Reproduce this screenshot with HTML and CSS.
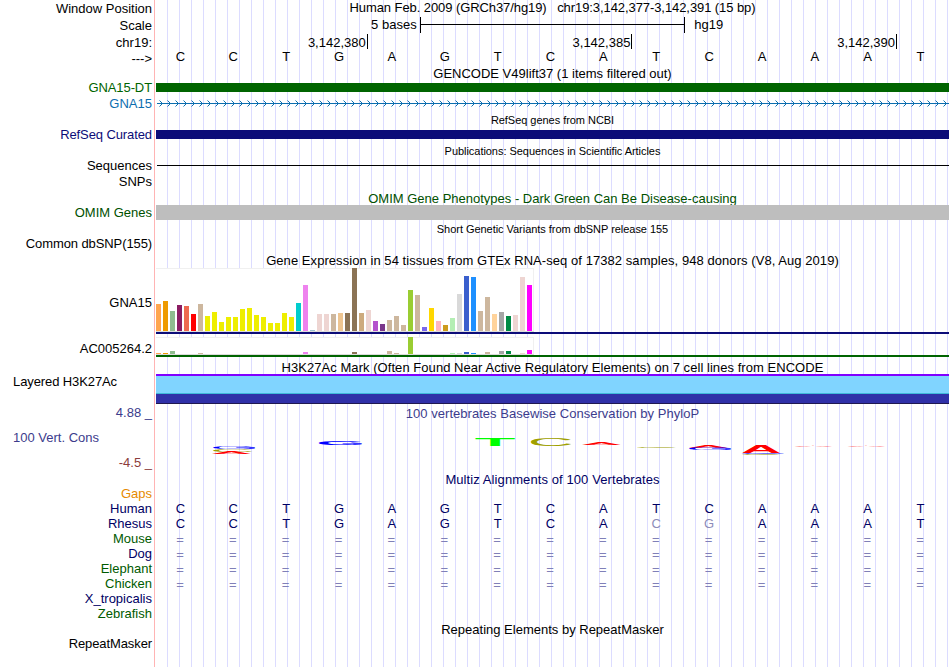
FILE: index.html
```
<!DOCTYPE html>
<html lang="en">
<head>
  <meta charset="UTF-8">
  <meta name="viewport" content="width=device-width, initial-scale=1.0">
  <title>Human chr19:3,142,377-3,142,391 - Genome Browser</title>
  <link rel="stylesheet" href="styles.css">
</head>
<body>
  <main class="browser">
    <!-- ruler -->
    <div class="row ruler-row">
      <div class="label">Window Position</div>
      <div class="track position">Human Feb. 2009 (GRCh37/hg19)&nbsp;&nbsp; chr19:3,142,377-3,142,391 (15 bp)</div>
    </div>
    <div class="row ruler-row">
      <div class="label">Scale</div>
      <div class="track scale">
        <span class="scale-size">5 bases</span>
        <span class="scale-bar"></span>
        <span class="scale-db">hg19</span>
      </div>
    </div>
    <div class="row ruler-row">
      <div class="label">chr19:</div>
      <div class="track ticks">
        <span>3,142,380</span>
        <span>3,142,385</span>
        <span>3,142,390</span>
      </div>
    </div>
    <div class="row base-row">
      <div class="label">---&gt;</div>
      <div class="track bases" data-seq="CCTGAGTCATCAAAT"></div>
    </div>

    <!-- genes -->
    <div class="row title-row gencode-title">
      <div class="label"></div>
      <div class="track">GENCODE V49lift37 (1 items filtered out)</div>
    </div>
    <div class="row">
      <div class="label green tight">GNA15-DT</div>
      <div class="track"><div class="exon exon-green"></div></div>
    </div>
    <div class="row">
      <div class="label blue">GNA15</div>
      <div class="track">
        <svg class="intron" width="792" height="16">
          <defs>
            <pattern id="arrows" width="8" height="16" patternUnits="userSpaceOnUse">
              <path d="M2.5 4.5L5.5 7.5L2.5 10.5" />
            </pattern>
          </defs>
          <rect width="792" height="16" fill="url(#arrows)" />
          <rect y="7" width="792" height="1" class="intron-line" />
        </svg>
      </div>
    </div>
    <div class="row title-row small">
      <div class="label"></div>
      <div class="track">RefSeq genes from NCBI</div>
    </div>
    <div class="row">
      <div class="label navy tight">RefSeq Curated</div>
      <div class="track"><div class="exon exon-navy"></div></div>
    </div>
    <div class="row title-row small">
      <div class="label"></div>
      <div class="track">Publications: Sequences in Scientific Articles</div>
    </div>
    <div class="row">
      <div class="label">Sequences</div>
      <div class="track"><div class="pub-line"></div></div>
    </div>
    <div class="row">
      <div class="label">SNPs</div>
      <div class="track"></div>
    </div>
    <div class="row title-row omim">
      <div class="label"></div>
      <div class="track">OMIM Gene Phenotypes - Dark Green Can Be Disease-causing</div>
    </div>
    <div class="row">
      <div class="label omim">OMIM Genes</div>
      <div class="track"><div class="omim-bar"></div></div>
    </div>
    <div class="row title-row small">
      <div class="label"></div>
      <div class="track">Short Genetic Variants from dbSNP release 155</div>
    </div>
    <div class="row">
      <div class="label tight">Common dbSNP(155)</div>
      <div class="track"></div>
    </div>

    <!-- expression -->
    <div class="row title-row gtex-title">
      <div class="label"></div>
      <div class="track">Gene Expression in 54 tissues from GTEx RNA-seq of 17382 samples, 948 donors (V8, Aug 2019)</div>
    </div>
    <div class="row gtex-row">
      <div class="label">GNA15</div>
      <div class="track gtex gtex-navy"><div class="bars" id="gna15"></div></div>
    </div>
    <div class="row gtex-row-small">
      <div class="label">AC005264.2</div>
      <div class="track gtex gtex-green"><div class="bars" id="ac005264"></div></div>
    </div>

    <!-- regulation -->
    <div class="row title-row h3k-title">
      <div class="label"></div>
      <div class="track">H3K27Ac Mark (Often Found Near Active Regulatory Elements) on 7 cell lines from ENCODE</div>
    </div>
    <div class="row h3k-row">
      <div class="label left tight">Layered H3K27Ac</div>
      <div class="track"><div class="h3k"></div></div>
    </div>

    <!-- conservation -->
    <div class="row cons-row">
      <div class="label cons-label">
        <span class="cons-max">4.88 _</span>
        <span class="cons-name">100 Vert. Cons</span>
        <span class="cons-min">-4.5 _</span>
      </div>
      <div class="track cons">
        <div class="cons-title">100 vertebrates Basewise Conservation by PhyloP</div>
        <svg id="logo" width="793" height="28" viewBox="156 432 793 28"></svg>
      </div>
    </div>
    <div class="row title-row multiz-title">
      <div class="label"></div>
      <div class="track">Multiz Alignments of 100 Vertebrates</div>
    </div>
    <div class="row align-row">
      <div class="label orange">Gaps</div>
      <div class="track"></div>
    </div>
    <div class="row align-row">
      <div class="label dark">Human</div>
      <div class="track bases dark" data-seq="CCTGAGTCATCAAAT"></div>
    </div>
    <div class="row align-row">
      <div class="label dark">Rhesus</div>
      <div class="track bases dark" data-seq="CCTGAGTCAcgAAAT"></div>
    </div>
    <div class="row align-row">
      <div class="label forest">Mouse</div>
      <div class="track bases" data-seq="==============="></div>
    </div>
    <div class="row align-row">
      <div class="label dark">Dog</div>
      <div class="track bases" data-seq="==============="></div>
    </div>
    <div class="row align-row">
      <div class="label forest">Elephant</div>
      <div class="track bases" data-seq="==============="></div>
    </div>
    <div class="row align-row">
      <div class="label forest">Chicken</div>
      <div class="track bases" data-seq="==============="></div>
    </div>
    <div class="row align-row">
      <div class="label dark">X_tropicalis</div>
      <div class="track"></div>
    </div>
    <div class="row align-row">
      <div class="label forest">Zebrafish</div>
      <div class="track"></div>
    </div>

    <div class="row title-row">
      <div class="label"></div>
      <div class="track">Repeating Elements by RepeatMasker</div>
    </div>
    <div class="row last-row">
      <div class="label tight">RepeatMasker</div>
      <div class="track"></div>
    </div>
  </main>

  <script src="tracks.js"></script>
</body>
</html>
```
FILE: styles.css
```
body {
  margin: 0;
  background-color: #fff;
  color: #000;
  font-family: "Liberation Sans", Arial, sans-serif;
  font-size: 13px;
  line-height: 15px;
  overflow: hidden;
}

/* vertical guide lines every 12px */
.browser {
  width: 949px;
  height: 667px;
  display: flex;
  flex-direction: column;
  background-image: linear-gradient(to right, #dcdcff 1px, transparent 1px);
  background-size: 12px 100%;
  background-position: 167px 0;
}

.row {
  display: flex;
  flex: none;
  height: 16px;
  white-space: nowrap;
}

.label {
  box-sizing: border-box;
  flex: none;
  width: 155px;
  padding-right: 2px;
  border-right: 1px solid #ffb4b4;
  background-color: #fff;
  box-shadow: 1px 0 0 #fff;
  text-align: right;
}

.label.left {
  text-align: left;
  padding-left: 13px;
}

.label.tight {
  letter-spacing: -0.1px;
}

.track {
  box-sizing: border-box;
  flex: 1;
  min-width: 0;
  padding-left: 1px;
}

.green { color: #006400; }
.blue { color: #0c6eaf; }
.navy { color: #0c0c78; }
.omim { color: #005000; }
.orange { color: #e68a00; }
.dark { color: #000064; }
.forest { color: #005a00; }

/* ruler */
.ruler-row {
  height: 17px;
}

.ruler-row .label {
  padding-top: 1px;
}

.position {
  text-align: center;
  letter-spacing: -0.08px;
}

.scale {
  display: grid;
  grid-template-columns: repeat(3, 1fr);
  padding-left: 0;
}

.scale-size {
  text-align: right;
  padding-right: 3px;
}

.scale-bar {
  height: 16px;
  border-left: 1px solid #000;
  border-right: 1px solid #000;
  margin-right: -1px;
  background: linear-gradient(#000, #000) 0 7px / 100% 1px no-repeat;
}

.scale-db {
  padding-left: 10px;
}

.ticks {
  display: grid;
  grid-template-columns: 4fr 5fr 5fr 1fr;
  padding-left: 0;
}

.ticks span {
  height: 14px;
  padding-top: 1px;
  padding-right: 1px;
  margin-right: -1px;
  border-right: 1px solid #000;
  text-align: right;
}

.base-row {
  height: 15px;
}

.base-row .label {
  line-height: 16px;
}

.bases {
  display: grid;
  grid-template-columns: repeat(15, 1fr);
  padding: 0;
  margin: 0 2px 0 -1px;
  text-align: center;
}

.base-row .bases {
  line-height: 14px;
  margin-top: -1px;
}

.bases .faded {
  color: #8c8cb9;
}

.bases .equal {
  color: #8080b8;
  padding-right: 1px;
  padding-top: 1px;
}

/* track titles */
.title-row {
  height: 15px;
}

.title-row .track {
  padding-top: 1px;
  text-align: center;
}

.title-row.small .track {
  font-size: 11px;
  letter-spacing: -0.04px;
}

.title-row.gencode-title {
  height: 14px;
}

.title-row.gencode-title .track {
  padding-top: 0;
}

.gtex-title {
  height: 16px;
  letter-spacing: 0.06px;
}

.h3k-title {
  height: 17px;
  letter-spacing: 0.05px;
}

.h3k-title .track {
  padding-top: 3px;
}

.multiz-title {
  height: 16px;
  color: #000064;
  letter-spacing: 0.09px;
}

.multiz-title .track {
  padding-top: 2px;
}

/* gene items */
.exon {
  height: 9px;
  margin-top: 3px;
}

.exon-green { background-color: #006400; }
.exon-navy { background-color: #0c0c78; }

.intron {
  display: block;
  margin-left: 1px;
}

.intron path {
  fill: none;
  stroke: #0c6eaf;
  stroke-width: 1;
}

.intron-line {
  fill: #0c6eaf;
}

.pub-line {
  height: 1px;
  margin: 7px 0 0 1px;
  background-color: #000;
}

.omim-bar {
  height: 15px;
  background-color: #bebebe;
}

/* expression bar graphs */
.gtex-row {
  height: 69px;
}

.gtex-row .label {
  padding-top: 27px;
}

.gtex-row-small {
  height: 20px;
}

.gtex-row-small .label {
  padding-top: 4px;
}

.gtex {
  display: flex;
  flex-direction: column;
}

.gtex::after {
  content: "";
  height: 2px;
}

.gtex-navy::after { background-color: #0c0c78; }
.gtex-green::after { background-color: #006400; }

.bars {
  box-sizing: border-box;
  width: 378px;
  height: 64px;
  display: flex;
  align-items: flex-end;
  gap: 2px;
  background-color: #fff;
  border-bottom: 1px solid #dcdcdc;
  box-shadow: inset 0 1px 0 #f0f0f0, inset -1px 0 0 #f0f0f0;
}

.gtex-row-small .bars {
  height: 18px;
}

.bar {
  flex: none;
  width: 5px;
}

/* H3K27Ac overlay, one band per cell line */
.h3k-row {
  height: 30px;
}

.h3k {
  height: 30px;
  background: linear-gradient(#8000ff 2px, #80d4ff 2px, #80d4ff 19px, #40b8d8 19px, #40b8d8 20px, #3030a8 20px, #3030a8 29px, #201850 29px);
}

/* conservation */
.cons-row {
  height: 66px;
}

.cons-label {
  display: flex;
  flex-direction: column;
  padding-top: 1px;
  color: #3c3c8c;
}

.cons-name {
  text-align: left;
  padding: 10px 0 10px 13px;
}

.cons-min {
  color: #8c3c3c;
}

.cons-title {
  padding-top: 2px;
  color: #3c3c8c;
  text-align: center;
  letter-spacing: 0.03px;
}

#logo {
  display: block;
  margin-top: 11px;
}

#logo text {
  font-size: 100px;
}

#logo .strong {
  font-weight: bold;
}

.align-row {
  height: 15px;
}

.last-row {
  flex: 1;
}
```
FILE: tracks.js
```
// median expression per tissue, in pixels
var gna15 = [27, 30, 20, 26, 25, 17, 27, 15, 19, 9, 14, 14, 22, 23, 16, 14, 8, 8,
  18, 14, 28, 46, 1, 17, 17, 17, 18, 18, 63, 18, 21, 10, 7, 11, 15, 6,
  41, 36, 4, 23, 10, 6, 13, 37, 55, 54, 20, 34, 17, 19, 15, 16, 54, 46];
var ac005264 = [1, 1, 3, 0, 0, 0, 1, 0, 0, 0, 0, 0, 0, 0, 0, 0, 0, 0,
  0, 0, 0, 2, 0, 0, 0, 0, 0, 0, 2, 0, 0, 0, 0, 3, 1, 0,
  17, 0, 0, 0, 0, 0, 1, 1, 2, 1, 0, 2, 0, 3, 3, 0, 1, 4];

var tissueColors = ['#ffa54f', '#ee9a00', '#8fbc8f', '#8b1c62', '#ee6a50', '#ff0000', '#cdb79e',
  '#eeee00', '#eeee00', '#eeee00', '#eeee00', '#eeee00', '#eeee00', '#eeee00',
  '#eeee00', '#eeee00', '#eeee00', '#eeee00', '#eeee00', '#eeee00',
  '#00cdcd', '#ee82ee', '#9ac0cd', '#eed5d2', '#eed5d2', '#cdb79e', '#eec591',
  '#8b7355', '#8b7355', '#cdaa7d', '#eed5d2', '#b452cd', '#7a378b', '#cdb79e',
  '#cdb79e', '#cdb79e', '#9acd32', '#cdb79e', '#7a67ee', '#ffd700', '#ffb6c1',
  '#cd9b1d', '#b4eeb4', '#d9d9d9', '#3a5fcd', '#1e90ff', '#cdb79e', '#cdb79e',
  '#ffd39b', '#a6a6a6', '#008b45', '#eed5d2', '#eed5d2', '#ff00ff'];

function drawBars(id, values) {
  var box = document.getElementById(id);
  values.forEach(function (v, i) {
    var bar = document.createElement('div');
    bar.className = 'bar';
    bar.style.height = v + 'px';
    bar.style.backgroundColor = tissueColors[i];
    box.appendChild(bar);
  });
}

drawBars('gna15', gna15);
drawBars('ac005264', ac005264);

// lower case in data-seq marks a mismatch, drawn faded
document.querySelectorAll('.bases').forEach(function (track) {
  track.dataset.seq.split('').forEach(function (c) {
    var cell = document.createElement('span');
    cell.textContent = c.toUpperCase();
    if (c === '=') cell.className = 'equal';
    else if (c !== c.toUpperCase()) cell.className = 'faded';
    track.appendChild(cell);
  });
});

// sequence logo: [base, x, y, width, height, bold]
var logo = [
  ['G', 213, 446, 43, 3], ['C', 213, 449, 39, 2.6], ['A', 212, 452, 39, 2],
  ['G', 319, 441, 43, 3.6, true],
  ['T', 476, 438, 38, 8, true],
  ['C', 531, 437.7, 40, 8.3],
  ['A', 582, 442, 39, 3],
  ['C', 637, 446, 39, 1.8],
  ['A', 689, 446, 39, 2], ['G', 689, 447.6, 43, 2.4],
  ['A', 741, 446, 40, 7.3, true], ['G', 742, 453, 43, 1.2], ['C', 742, 454, 38, 1.2],
  ['A', 794, 446, 39, 1.2],
  ['A', 847, 446, 39, 1.2]
];
var baseColors = { A: '#ff0000', C: '#a0a000', G: '#0000ff', T: '#00ff00' };
// left edge, width, top and height of each letter at 100px
var ink = {
  A: [0, 67, 69, 69],
  C: [5, 63, 70, 71],
  G: [5, 67, 70, 71],
  T: [2, 57, 69, 69]
};
var inkBold = {
  A: [0, 72, 69, 69],
  G: [4.5, 68, 70, 71],
  T: [2, 57, 69, 69]
};

var svg = document.getElementById('logo');
logo.forEach(function (l) {
  var m = l[5] ? inkBold[l[0]] : ink[l[0]];
  var sx = l[3] / m[1];
  var sy = l[4] / m[3];
  var t = document.createElementNS('http://www.w3.org/2000/svg', 'text');
  t.setAttribute('transform', 'translate(' + (l[1] - m[0] * sx) + ' ' + (l[2] + m[2] * sy) + ') scale(' + sx + ' ' + sy + ')');
  t.setAttribute('fill', baseColors[l[0]]);
  if (l[5]) t.setAttribute('class', 'strong');
  t.textContent = l[0];
  svg.appendChild(t);
});
```
